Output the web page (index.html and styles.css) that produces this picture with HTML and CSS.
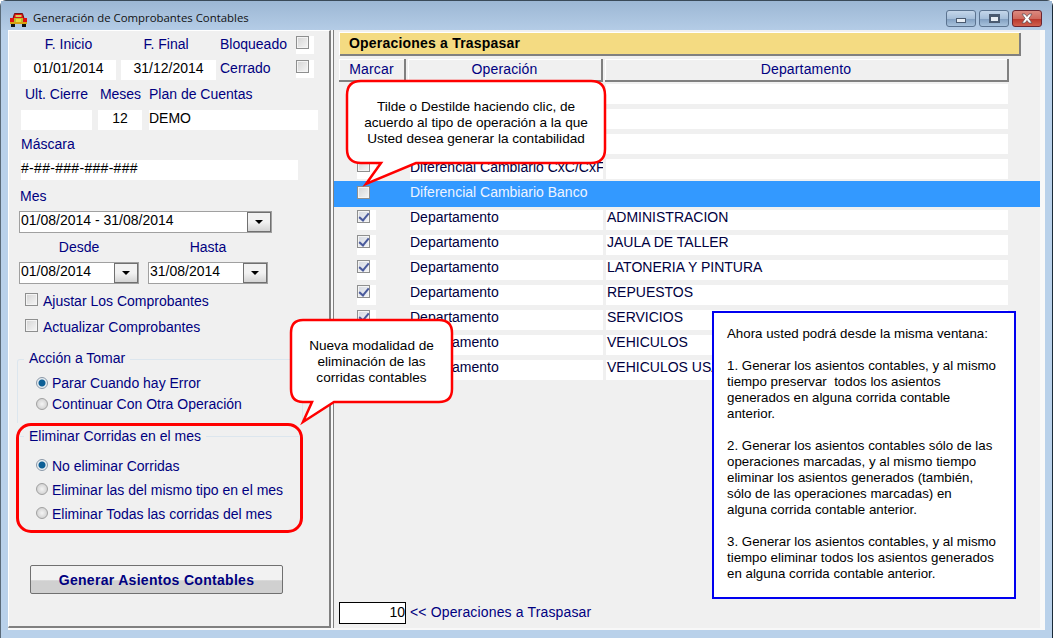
FILE: index.html
```html
<!DOCTYPE html>
<html lang="es">
<head>
    <meta charset="UTF-8">
    <title>Generación de Comprobantes Contables</title>
    <link rel="stylesheet" href="styles.css">
</head>
<body>
<div class="window">
    <div class="titlebar">
        <svg class="app-icon" width="17" height="14" viewBox="0 0 17 14">
            <path d="M4.5 .5h8l1.5 5H3z" fill="#e01010" stroke="#701010" stroke-width="1"/>
            <rect x="5.5" y="2" width="6" height="2" fill="#d8c860"/>
            <rect x="0" y="5" width="4" height="5" fill="#e01010"/>
            <rect x="13" y="5" width="4" height="5" fill="#e01010"/>
            <rect x="4" y="5" width="9" height="6" fill="#b8b830"/>
            <rect x="6" y="6" width="5" height="4" fill="#e8d840"/>
            <rect x="0" y="9" width="17" height="2" fill="#d8a010"/>
            <rect x="1" y="11" width="4" height="3" fill="#111"/>
            <rect x="12" y="11" width="4" height="3" fill="#111"/>
        </svg>
        <span class="title-text">Generación de Comprobantes Contables</span>
        <div class="win-buttons">
            <div class="win-btn"><span class="glyph-min"></span></div>
            <div class="win-btn"><span class="glyph-max"></span></div>
            <div class="win-btn win-close">
                <svg width="16" height="11" viewBox="0 0 16 11"><path d="M3 1h3l2 2.5L10 1h3L9.8 5.5 13 10h-3L8 7.5 6 10H3l3.2-4.5z" fill="#fff" stroke="#5a4a50" stroke-width=".7"/></svg>
            </div>
        </div>
    </div>

    <div class="client">
        <!-- panel izquierdo -->
        <div class="left">
            <div class="row row-dates-label">
                <div class="lbl center">F. Inicio</div>
                <div class="lbl center shift">F. Final</div>
                <div class="lbl pull">Bloqueado</div>
                <div class="check-cell"><span class="check"></span></div>
            </div>
            <div class="row row-dates">
                <div class="field center">01/01/2014</div>
                <div class="field center">31/12/2014</div>
                <div class="lbl pull">Cerrado</div>
                <div class="check-cell"><span class="check"></span></div>
            </div>
            <div class="row row-plan-label">
                <div class="lbl center">Ult. Cierre</div>
                <div class="lbl center">Meses</div>
                <div class="lbl">Plan de Cuentas</div>
            </div>
            <div class="row row-plan">
                <div class="field"></div>
                <div class="field center">12</div>
                <div class="field">DEMO</div>
            </div>
            <div class="lbl block-label">Máscara</div>
            <div class="field mask">#-##-###-###-###</div>
            <div class="lbl block-label mes">Mes</div>
            <div class="combo combo-wide">
                <span class="combo-text">01/08/2014 - 31/08/2014</span>
                <span class="combo-btn"></span>
            </div>
            <div class="row row-range-label">
                <div class="lbl center">Desde</div>
                <div class="lbl center">Hasta</div>
            </div>
            <div class="row row-range">
                <div class="combo">
                    <span class="combo-text">01/08/2014</span>
                    <span class="combo-btn"></span>
                </div>
                <div class="combo">
                    <span class="combo-text">31/08/2014</span>
                    <span class="combo-btn"></span>
                </div>
            </div>
            <div class="option"><span class="check"></span>Ajustar Los Comprobantes</div>
            <div class="option"><span class="check"></span>Actualizar Comprobantes</div>

            <div class="group group-action">
                <div class="group-title">Acción a Tomar</div>
                <div class="radio-line"><span class="radio on"></span>Parar Cuando hay Error</div>
                <div class="radio-line"><span class="radio"></span>Continuar Con Otra Operación</div>
            </div>

            <div class="highlight">
                <div class="group group-delete">
                    <div class="group-title">Eliminar Corridas en el mes</div>
                    <div class="radio-line"><span class="radio on"></span>No eliminar Corridas</div>
                    <div class="radio-line"><span class="radio"></span>Eliminar las del mismo tipo en el mes</div>
                    <div class="radio-line"><span class="radio"></span>Eliminar Todas las corridas del mes</div>
                </div>
            </div>

            <button class="generate">Generar Asientos Contables</button>
        </div>

        <!-- panel derecho -->
        <div class="right">
            <div class="section-bar">Operaciones a Traspasar</div>
            <div class="col-heads">
                <div class="col-head col-mark">Marcar</div>
                <div class="col-head col-op">Operación</div>
                <div class="col-head col-dept">Departamento</div>
            </div>
            <div class="ops">
                <div class="op-row"><div class="cell-check"><span class="check"></span></div><div class="cell-op"></div><div class="cell-dept"></div></div>
                <div class="op-row"><div class="cell-check"><span class="check"></span></div><div class="cell-op"></div><div class="cell-dept"></div></div>
                <div class="op-row"><div class="cell-check"><span class="check"></span></div><div class="cell-op"></div><div class="cell-dept"></div></div>
                <div class="op-row above-selected"><div class="cell-check"><span class="check"></span></div><div class="cell-op">Diferencial Cambiario CxC/CxF</div><div class="cell-dept"></div></div>
                <div class="op-row selected"><div class="cell-check"><span class="check"></span></div><div class="cell-op">Diferencial Cambiario Banco</div><div class="cell-dept"></div></div>
                <div class="op-row"><div class="cell-check"><span class="check on"></span></div><div class="cell-op">Departamento</div><div class="cell-dept">ADMINISTRACION</div></div>
                <div class="op-row"><div class="cell-check"><span class="check on"></span></div><div class="cell-op">Departamento</div><div class="cell-dept">JAULA DE TALLER</div></div>
                <div class="op-row"><div class="cell-check"><span class="check on"></span></div><div class="cell-op">Departamento</div><div class="cell-dept">LATONERIA Y PINTURA</div></div>
                <div class="op-row"><div class="cell-check"><span class="check on"></span></div><div class="cell-op">Departamento</div><div class="cell-dept">REPUESTOS</div></div>
                <div class="op-row"><div class="cell-check"><span class="check on"></span></div><div class="cell-op">Departamento</div><div class="cell-dept">SERVICIOS</div></div>
                <div class="op-row"><div class="cell-check"><span class="check on"></span></div><div class="cell-op">Departamento</div><div class="cell-dept">VEHICULOS</div></div>
                <div class="op-row"><div class="cell-check"><span class="check on"></span></div><div class="cell-op">Departamento</div><div class="cell-dept">VEHICULOS USADOS</div></div>
            </div>
            <div class="count-line">
                <div class="count">10</div>
                <span class="count-label">&lt;&lt; Operaciones a Traspasar</span>
            </div>
        </div>
    </div>

    <!-- globos de ayuda -->
    <div class="callout callout-top">
        <svg width="266" height="110" viewBox="0 0 266 110">
            <path d="M16 2H246Q260 2 260 16V70Q260 84 246 84H71L21 105L36 84H16Q2 84 2 70V16Q2 2 16 2Z" fill="#fff" stroke="#f00" stroke-width="2.5"/>
        </svg>
        <div class="callout-text">Tilde o Destilde haciendo clic, de<br>acuerdo al tipo de operación a la que<br>Usted desea generar la contabilidad</div>
    </div>
    <div class="callout callout-left">
        <svg width="168" height="108" viewBox="0 0 168 108">
            <path d="M14 2H150Q163 2 163 15V71Q163 84 150 84H45L14 104L23 84H14Q2 84 2 71V15Q2 2 14 2Z" fill="#fff" stroke="#f00" stroke-width="2.5"/>
        </svg>
        <div class="callout-text">Nueva modalidad de<br>eliminación de las<br>corridas contables</div>
    </div>
    <div class="note">
        Ahora usted podrá desde la misma ventana:<br><br>
        1. Generar los asientos contables, y al mismo<br>
        tiempo preservar&nbsp; todos los asientos<br>
        generados en alguna corrida contable<br>
        anterior.<br><br>
        2. Generar los asientos contables sólo de las<br>
        operaciones marcadas, y al mismo tiempo<br>
        eliminar los asientos generados (también,<br>
        sólo de las operaciones marcadas) en<br>
        alguna corrida contable anterior.<br><br>
        3. Generar los asientos contables, y al mismo<br>
        tiempo eliminar todos los asientos generados<br>
        en alguna corrida contable anterior.
    </div>
</div>
</body>
</html>
```
FILE: styles.css
```css
* {
    box-sizing: border-box;
}
html, body {
    margin: 0;
    padding: 0;
    height: 100%;
    overflow: hidden;
    background-color: #fff;
}
body {
    font-family: "Liberation Sans", Arial, sans-serif;
    font-size: 14px;
    color: #000;
}
.window {
    position: relative;
    width: 1053px;
    height: 638px;
    display: flex;
    flex-direction: column;
    background-color: #b9d1ea;
    border-top: 1px solid #3a4a58;
    border-left: 1px solid #5a6a78;
    border-right: 1px solid #1a2a38;
    border-radius: 6px 6px 0 0;
}

/* barra de titulo */
.titlebar {
    height: 29px;
    flex: none;
    display: flex;
    align-items: flex-start;
    padding: 0 10px 0 9px;
    background: linear-gradient(#9cb7d4, #b4cce6);
}
.app-icon {
    margin-top: 12px;
    margin-right: 6px;
}
.title-text {
    font-family: "Open Sans", sans-serif;
    font-size: 11.4px;
    line-height: 16px;
    margin-top: 9px;
    color: #111;
}
.win-buttons {
    margin-left: auto;
    display: flex;
    gap: 3px;
    margin-top: 9px;
}
.win-btn {
    width: 30px;
    height: 17px;
    display: flex;
    align-items: center;
    justify-content: center;
    border: 1px solid #5b7390;
    border-radius: 3px;
    background: linear-gradient(#c4d6ea 0, #a6bfda 50%, #7f9dbf 51%, #a8c2dc 100%);
}
.win-close {
    border-color: #6b2530;
    background: linear-gradient(#dc8a80 0, #cf6a5e 50%, #b8352a 51%, #d0604e 100%);
}
.glyph-min {
    width: 10px;
    height: 5px;
    margin-top: 3px;
    background-color: #e8eef4;
    border: 1px solid #4a5a70;
}
.glyph-max {
    width: 11px;
    height: 9px;
    background-color: #e8eef4;
    border: 2px solid #4a5a70;
    border-top-width: 3px;
}

.client {
    flex: none;
    height: 600px;
    margin: 0 7px;
    display: flex;
    background-color: #f8f8f8;
}

/* panel izquierdo */
.left {
    width: 323px;
    flex: none;
    height: 598px;
    padding: 5px 0 0 12px;
    background-color: #f0f0f0;
    border-top: 1px solid #fff;
    border-left: 1px solid #fff;
    border-right: 2px solid #808080;
    border-bottom: 2px solid #808080;
    color: #000080;
}
.lbl {
    height: 18px;
    line-height: 17px;
    white-space: nowrap;
}
.center {
    text-align: center;
}
.shift {
    padding-right: 5px;
}
.pull {
    margin-left: -1px;
}
.row {
    display: grid;
}
.row-dates-label, .row-dates {
    grid-template-columns: 95px 95px 70px 18px;
    column-gap: 5px;
}
.row-dates {
    margin-top: 6px;
    height: 20px;
}
.row-dates .lbl {
    line-height: 16px;
}
.row-plan-label, .row-plan {
    grid-template-columns: 71px 45px 169px;
    column-gap: 6px;
}
.row-plan-label {
    margin-top: 5px;
}
.row-plan-label .lbl {
    line-height: 19px;
}
.row-plan {
    margin-top: 7px;
}
.row-plan .field:nth-child(2) {
    margin-right: 1px;
}
.field {
    height: 20px;
    line-height: 16px;
    background-color: #fff;
    color: #000;
    white-space: nowrap;
}
.check-cell {
    height: 18px;
    background-color: #fff;
}
.block-label {
    margin-top: 5px;
    line-height: 19px;
}
.mes {
    margin-top: 7px;
    margin-left: -1px;
}
.mask {
    margin-top: 7px;
    width: 277px;
    letter-spacing: .3px;
}
.check {
    display: inline-block;
    width: 13px;
    height: 13px;
    background: linear-gradient(135deg, #d4d4d4, #f6f6f6);
    border: 1px solid #8e8f8f;
    outline: 1px solid #f4f4f4;
    outline-offset: -2px;
    vertical-align: top;
}
.check.on {
    position: relative;
    background: linear-gradient(135deg, #d4d8e0, #f2f4f8);
}
.check.on::after {
    content: "";
    position: absolute;
    left: 3px;
    top: 0;
    width: 4px;
    height: 8px;
    border: solid #4a5a9c;
    border-width: 0 2px 2px 0;
    transform: rotate(40deg);
}
.check-cell .check {
    display: block;
}
.combo {
    height: 22px;
    display: flex;
    align-items: center;
    justify-content: space-between;
    background-color: #fff;
    border: 1px solid #a0a0a0;
    color: #000;
    padding-left: 1px;
}
.combo-text {
    margin-top: -4px;
}
.combo-btn {
    width: 24px;
    height: 20px;
    position: relative;
    border: 1px solid #707070;
    background: linear-gradient(#f2f2f2 50%, #d4d4d4);
}
.combo-btn::after {
    content: "";
    position: absolute;
    left: 7px;
    top: 7px;
    border-left: 4px solid transparent;
    border-right: 4px solid transparent;
    border-top: 4px solid #000;
}
.combo-wide {
    width: 253px;
    margin-top: 6px;
    margin-left: -2px;
}
.row-range-label {
    grid-template-columns: 120px 120px;
    column-gap: 9px;
    margin-top: 5px;
    margin-left: -2px;
}
.row-range-label .lbl {
    line-height: 19px;
}
.row-range {
    grid-template-columns: 120px 120px;
    column-gap: 9px;
    margin-top: 6px;
    margin-left: -2px;
}
.option {
    height: 18px;
    margin-top: 8px;
    margin-left: 4px;
    line-height: 18px;
    display: flex;
    align-items: center;
    white-space: nowrap;
}
.option .check {
    margin-right: 5px;
    margin-top: -3px;
    flex: none;
}
.group {
    position: relative;
    margin-left: -4px;
}
.group-action {
    margin-top: 23px;
    height: 64px;
    width: 286px;
    border: 1px solid #dce6ee;
    border-bottom: 0;
    border-radius: 3px 3px 0 0;
    padding: 13px 0 0 18px;
}
.group-title {
    position: absolute;
    left: 6px;
    top: -10px;
    height: 18px;
    line-height: 17px;
    padding: 0 5px;
    background-color: #f0f0f0;
    white-space: nowrap;
}
.radio-line {
    height: 21px;
    line-height: 19px;
    display: flex;
    align-items: center;
    white-space: nowrap;
}
.radio {
    width: 12px;
    height: 12px;
    margin-right: 4px;
    margin-top: -2px;
    flex: none;
    border-radius: 50%;
    border: 1px solid #a0a0a0;
    background: radial-gradient(circle, #f4f4f4, #c8c8c8);
}
.radio.on {
    border-color: #8a98a8;
    background: radial-gradient(circle, #0d5f96 0 3px, #e8eef2 4px);
}
.highlight {
    width: 287px;
    height: 110px;
    margin-left: -5px;
    border: 3px solid #f00;
    border-radius: 15px;
    padding-top: 10px;
    position: relative;
}
.group-delete {
    margin-left: 0;
    border-top: 1px solid #dce6ee;
    padding: 17px 0 0 17px;
}
.group-delete .group-title {
    left: 5px;
    top: -9px;
}
.group-delete .radio-line {
    height: 24px;
}
.generate {
    display: block;
    width: 253px;
    height: 29px;
    margin-top: 32px;
    margin-left: 9px;
    padding: 0;
    border: 1px solid #707070;
    border-radius: 2px;
    background: linear-gradient(#f2f2f2 50%, #d0d0d0 55%, #d0d0d0);
    font-family: "Liberation Sans", Arial, sans-serif;
    font-size: 14px;
    font-weight: bold;
    color: #000080;
    letter-spacing: .3px;
}

/* panel derecho */
.right {
    flex: 1;
    display: flex;
    flex-direction: column;
    margin-left: 2px;
    height: 598px;
    border-left: 1px solid #808080;
    border-right: 5px solid #f8f8f8;
    color: #000080;
    background-color: #f0f0f0;
}
.section-bar {
    height: 23px;
    width: 681px;
    margin: 3px 0 0 6px;
    padding-left: 9px;
    line-height: 20px;
    font-weight: bold;
    color: #000;
    letter-spacing: .2px;
    background-color: #f4db82;
    border: solid #808080;
    border-width: 0 2px 2px 0;
    box-shadow: -1px -1px 0 #fff;
}
.col-heads {
    display: flex;
    gap: 2px;
    margin: 3px 0 0 5px;
    height: 23px;
}
.col-head {
    height: 23px;
    line-height: 20px;
    text-align: center;
    letter-spacing: .15px;
    background-color: #f0f0f0;
    border: solid #808080;
    border-width: 0 2px 2px 0;
    box-shadow: inset 1px 1px 0 #fff;
}
.col-mark {
    width: 67px;
}
.col-op {
    width: 195px;
}
.col-dept {
    width: 404px;
}
.ops {
    margin-top: 2px;
    color: #000040;
}
.op-row {
    height: 25px;
    display: flex;
    padding-left: 23px;
}
.cell-check {
    width: 19px;
    height: 20px;
    background-color: #fff;
}
.cell-op {
    width: 193px;
    height: 20px;
    margin-left: 34px;
    line-height: 14px;
    background-color: #fff;
    white-space: nowrap;
    overflow: hidden;
}
.cell-dept {
    width: 402px;
    height: 20px;
    margin-left: 3px;
    padding-left: 1px;
    line-height: 14px;
    background-color: #fff;
    white-space: nowrap;
}
.above-selected .cell-op {
    line-height: 16px;
}
.selected {
    height: 26px;
    margin-top: -3px;
    margin-bottom: 3px;
    padding-top: 4px;
    background-color: #3399ff;
}
.selected .cell-check {
    padding-top: 1px;
    background: none;
}
.selected .cell-op, .selected .cell-dept {
    background: none;
    color: #eef4ff;
}
.count-line {
    margin-top: auto;
    margin-left: 5px;
    margin-bottom: 4px;
    display: flex;
    align-items: center;
    gap: 4px;
}
.count {
    width: 67px;
    height: 22px;
    line-height: 18px;
    text-align: right;
    color: #000;
    background-color: #fff;
    border: 1px solid #000;
}
.count-label {
    margin-top: -2px;
    letter-spacing: .15px;
}

/* globos y nota */
.callout {
    position: absolute;
}
.callout svg {
    display: block;
}
.callout-text {
    position: absolute;
    text-align: center;
    font-size: 13.6px;
    line-height: 16px;
    color: #000;
    white-space: nowrap;
}
.callout-top {
    left: 344px;
    top: 78px;
}
.callout-top .callout-text {
    left: 2px;
    width: 258px;
    top: 20px;
}
.callout-left {
    left: 288px;
    top: 317px;
}
.callout-left .callout-text {
    left: 2px;
    width: 161px;
    top: 20px;
}
.note {
    position: absolute;
    left: 711px;
    top: 310px;
    width: 304px;
    height: 288px;
    padding: 13px 0 0 13px;
    font-size: 13.3px;
    line-height: 16px;
    white-space: nowrap;
    color: #000;
    background-color: #fff;
    border: 2px solid #0000f0;
}
```
